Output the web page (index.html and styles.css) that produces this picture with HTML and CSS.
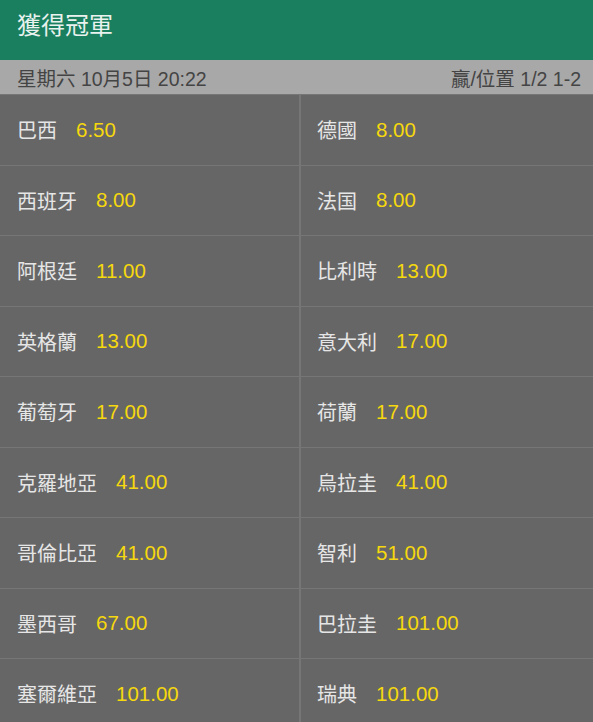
FILE: index.html
```html
<!DOCTYPE html>
<html lang="zh-Hant">
<head>
<meta charset="UTF-8">
<meta name="viewport" content="width=device-width, initial-scale=1.0">
<title>獲得冠軍</title>
<link rel="stylesheet" href="styles.css">
</head>
<body>

<header class="market-title">獲得冠軍</header>

<div class="market-info">
  <span>星期六 10月5日 20:22</span>
  <span>贏/位置 1/2 1-2</span>
</div>

<main class="odds-grid">
  <div class="cell"><span class="team">巴西</span><span class="price">6.50</span></div>
  <div class="cell"><span class="team">德國</span><span class="price">8.00</span></div>
  <div class="cell"><span class="team">西班牙</span><span class="price">8.00</span></div>
  <div class="cell"><span class="team">法国</span><span class="price">8.00</span></div>
  <div class="cell"><span class="team">阿根廷</span><span class="price">11.00</span></div>
  <div class="cell"><span class="team">比利時</span><span class="price">13.00</span></div>
  <div class="cell"><span class="team">英格蘭</span><span class="price">13.00</span></div>
  <div class="cell"><span class="team">意大利</span><span class="price">17.00</span></div>
  <div class="cell"><span class="team">葡萄牙</span><span class="price">17.00</span></div>
  <div class="cell"><span class="team">荷蘭</span><span class="price">17.00</span></div>
  <div class="cell"><span class="team">克羅地亞</span><span class="price">41.00</span></div>
  <div class="cell"><span class="team">烏拉圭</span><span class="price">41.00</span></div>
  <div class="cell"><span class="team">哥倫比亞</span><span class="price">41.00</span></div>
  <div class="cell"><span class="team">智利</span><span class="price">51.00</span></div>
  <div class="cell"><span class="team">墨西哥</span><span class="price">67.00</span></div>
  <div class="cell"><span class="team">巴拉圭</span><span class="price">101.00</span></div>
  <div class="cell"><span class="team">塞爾維亞</span><span class="price">101.00</span></div>
  <div class="cell"><span class="team">瑞典</span><span class="price">101.00</span></div>
</main>

</body>
</html>
```

FILE: styles.css
```css
body {
  margin: 0;
  font-family: "Liberation Sans", "Noto Sans CJK TC", sans-serif;
  background: #666;
}
.market-title {
  background: #1a7f5e;
  color: #e9f2ee;
  height: 60px;
  padding: 0 17px;
  font-size: 24px;
  line-height: 52px;
}
.market-info {
  background: #a8a8a8;
  color: #444;
  height: 34px;
  padding: 0 12px 0 17px;
  display: flex;
  justify-content: space-between;
  align-items: center;
  font-size: 19.5px;
}
.odds-grid {
  display: grid;
  grid-template-columns: 299px 1fr;
  grid-auto-rows: 69.5px;
  gap: 1px 2px;
  background: #767676;
  padding-top: 1px;
}
.cell {
  background: #666;
  display: flex;
  align-items: center;
  padding-left: 17px;
  font-size: 20px;
}
.cell:nth-child(even) {
  padding-left: 16px;
}
.team {
  color: #e6e6e6;
  margin-right: 19px;
}
.price {
  color: #f6d80e;
  font-size: 20.5px;
}
```
